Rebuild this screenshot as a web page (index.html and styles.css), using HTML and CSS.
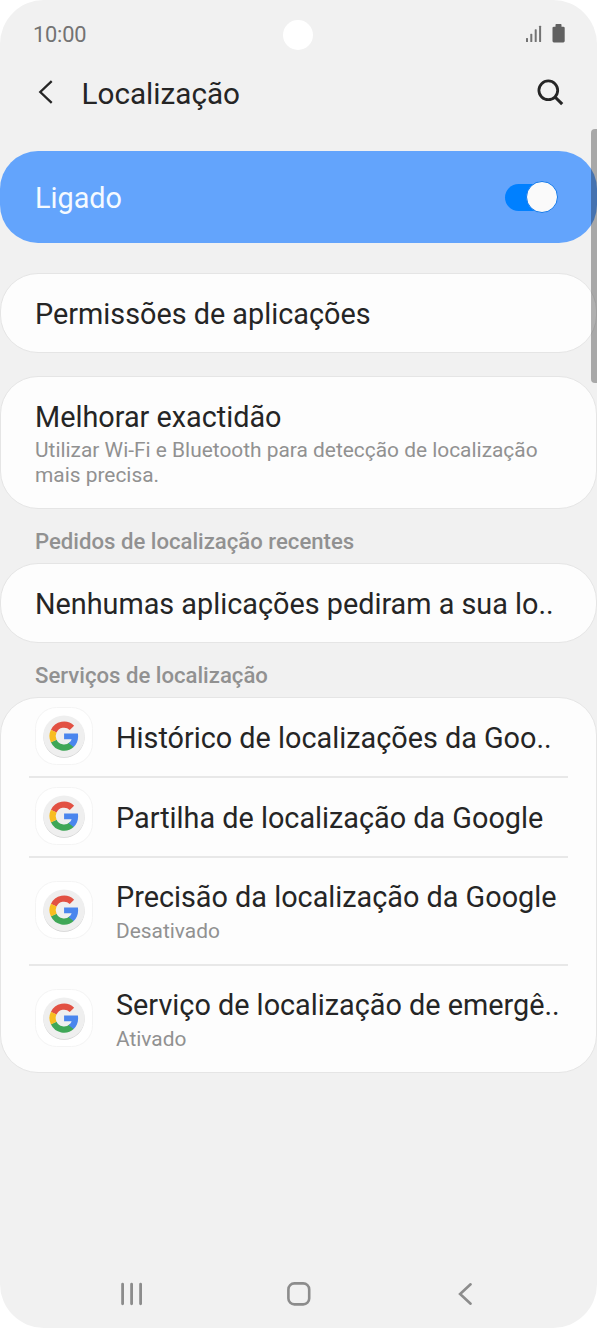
FILE: index.html
```html
<!DOCTYPE html>
<html lang="pt">
<head>
<meta charset="utf-8">
<title>Localização</title>
<link rel="stylesheet" href="styles.css">
</head>
<body>
<svg class="defs" width="0" height="0" aria-hidden="true">
  <symbol id="google" viewBox="0 0 58 58">
    <rect x=".5" y=".5" width="57" height="57" rx="21" fill="#fff" stroke="#f4f4f4"/>
    <circle cx="29" cy="30.2" r="20.6" fill="#cfcfcf"/>
    <circle cx="29" cy="29.2" r="20.8" fill="#efefef"/>
    <g transform="translate(14.8 14.8) scale(.595)">
      <path fill="none" stroke="#3fa757" stroke-width="10.5" d="M37 38A19 19 0 0 1 6.6 32.2"/>
      <path fill="none" stroke="#e25143" stroke-width="10.5" d="M6.6 15.8A19 19 0 0 1 37.2 10.2"/>
      <path fill="none" stroke="#f8bd20" stroke-width="10.5" d="M6.6 32.4A19 19 0 0 1 6.6 15.6"/>
      <path fill="#4a86ee" d="M47.6 24.55c0-1.57-.15-3.09-.38-4.75H24v9.6h12.6c-.58 2.4-2.26 4.9-4.78 6.6l8.27 6.4c4.51-4.18 7.5-10.56 7.5-17.85z"/>
    </g>
  </symbol>
</svg>
<div class="phone">
  <header class="status">
    <span class="time">10:00</span>
    <span class="camera"></span>
    <svg class="signals" width="42" height="22" viewBox="0 0 42 22">
      <g fill="#737373"><rect x="1" y="15" width="2" height="4" rx=".6"/><rect x="5.3" y="10.8" width="2" height="8.2" rx=".6"/><rect x="9.7" y="6.3" width="2" height="12.7" rx=".6"/><rect x="14.1" y="2.7" width="2" height="16.3" rx=".6"/></g>
      <path fill="#616161" d="M31.3 1h4.4q.8 0 .8.8V3.7h1.6q1.6 0 1.6 1V18q0 1.4-1.4 1.4h-9.4q-1.4 0-1.4-1.4V4.7q0-1 1.6-1h1.4V1.8q0-.8.8-.8z"/>
    </svg>
  </header>
  <div class="titlebar">
    <svg class="back" width="16" height="26" viewBox="0 0 16 26"><path d="M14.7 2.2 3.3 13l11.4 10.8" fill="none" stroke="#252525" stroke-width="2.3"/></svg>
    <h1 class="title">Localização</h1>
    <svg class="search" width="28" height="28" viewBox="0 0 28 28"><circle cx="11.3" cy="11.3" r="9.4" fill="none" stroke="#252525" stroke-width="2.8"/><path d="m18 18 7.2 7.2" stroke="#252525" stroke-width="3.1"/></svg>
  </div>
  <main class="content">
    <section class="master">
      <span class="label on">Ligado</span>
      <span class="switch"><span class="track"></span><span class="thumb"></span></span>
    </section>
    <section class="card single permissions"><span class="label">Permissões de aplicações</span></section>
    <section class="card accuracy">
      <span class="label">Melhorar exactidão</span>
      <p class="sub">Utilizar Wi-Fi e Bluetooth para detecção de localização<br>mais precisa.</p>
    </section>
    <h2 class="heading">Pedidos de localização recentes</h2>
    <section class="card single"><span class="label">Nenhumas aplicações pediram a sua lo..</span></section>
    <h2 class="heading">Serviços de localização</h2>
    <section class="card list">
      <div class="row"><svg class="app"><use href="#google"/></svg><span class="label">Histórico de localizações da Goo..</span></div>
      <div class="row"><svg class="app"><use href="#google"/></svg><span class="label">Partilha de localização da Google</span></div>
      <div class="row tall"><svg class="app"><use href="#google"/></svg><div class="texts"><span class="label">Precisão da localização da Google</span><span class="sub">Desativado</span></div></div>
      <div class="row tall"><svg class="app"><use href="#google"/></svg><div class="texts"><span class="label">Serviço de localização de emergê..</span><span class="sub">Ativado</span></div></div>
    </section>
  </main>
  <nav class="nav">
    <svg width="24" height="24" viewBox="0 0 24 24"><path d="M2.6 2.2v19.6M11.6 2.2v19.6M20.6 2.2v19.6" stroke="#8c8c8c" stroke-width="2.8" stroke-linecap="round"/></svg>
    <svg width="24" height="24" viewBox="0 0 24 24"><rect x="1.4" y="1.4" width="20.8" height="21" rx="6" fill="none" stroke="#8c8c8c" stroke-width="2.6"/></svg>
    <svg width="24" height="24" viewBox="0 0 24 24"><path d="M17.6 2.3 7.1 12l10.5 9.7" fill="none" stroke="#8c8c8c" stroke-width="2.6" stroke-linecap="round"/></svg>
  </nav>
  <div class="scrollbar"></div>
</div>
</body>
</html>
```
FILE: styles.css
```css
* { box-sizing: border-box; margin: 0; padding: 0; }
body { background: #fff; font-family: Roboto, sans-serif; color: #252525; }
.defs { position: absolute; }
svg { display: block; flex: none; }
.phone { position: relative; width: 597px; height: 1328px; overflow: hidden; background: #f1f1f1; border-radius: 44px; display: flex; flex-direction: column; }
.status { height: 68px; padding: 0 30px 0 33px; display: grid; grid-template-columns: 250px 30px 1fr; align-items: center; }
.time { font-size: 21.8px; color: #737373; line-height: 26px; margin-top: 2px; letter-spacing: -.2px; }
.camera { width: 30px; height: 30px; margin-top: 2px; border-radius: 50%; background: #fff; }
.signals { justify-self: end; }
.titlebar { height: 52px; padding: 0 32px 0 37px; display: flex; align-items: center; }
.back { margin-top: -4px; }
.title { flex: 1; margin-left: 28.5px; font-size: 29.7px; font-weight: 400; line-height: 36px; }
.search { margin-top: -3px; }
.content { padding-top: 31px; }
.label { font-size: 28.8px; line-height: 34px; white-space: nowrap; display: block; }
.master { height: 92px; padding: 0 39px 0 35px; border-radius: 38px; background: #63a4fc; display: flex; align-items: center; justify-content: space-between; }
.on { color: #f5faff; padding-top: 2px; }
.switch { display: grid; width: 53px; height: 32px; align-items: center; }
.track, .thumb { grid-area: 1 / 1; }
.track { width: 50px; height: 27px; border-radius: 14px; background: #0080ff; }
.thumb { justify-self: end; width: 32px; height: 32px; border-radius: 50%; background: #fafafa; border: 1.5px solid #1279ec; }
.card { background: #fdfdfd; border: 1px solid #e5e5e5; border-radius: 38px; }
.single { height: 80px; padding: 2px 34px 0; display: flex; align-items: center; }
.permissions { margin: 30px 0 23px; }
.accuracy { height: 133px; padding: 23px 34px 0; }
.sub { display: block; margin-top: 4px; font-size: 20.9px; line-height: 24.5px; color: #919191; white-space: nowrap; }
.heading { font-size: 22.15px; font-weight: 500; line-height: 26px; color: #919191; padding: 19px 35px 9px; height: 54px; white-space: nowrap; }
.list { height: 376px; padding: 0 28px; }
.row { height: 80px; padding-left: 6px; display: flex; align-items: center; gap: 23px; }
.row:first-child { height: 78px; }
.row .label { padding-top: 1px; }
.row + .row { border-top: 2px solid #e8e8e8; }
.row.tall { height: 108px; }
.texts { padding-top: 1px; }
.texts .sub { margin-top: 5px; }
.texts { margin-bottom: 1px; }
.app { width: 58px; height: 58px; margin-bottom: 2px; }
.scrollbar { position: absolute; right: 0; top: 129px; width: 6px; height: 254px; border-radius: 4px 0 0 4px; background: rgba(0, 0, 0, .3); }
.nav { position: absolute; left: 0; right: 0; bottom: 22px; padding: 0 120px; display: flex; justify-content: space-between; }
```
